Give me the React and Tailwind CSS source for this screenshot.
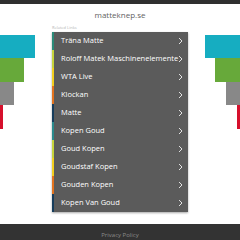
const links = [
  { label: "Träna Matte", stripe: "border-[#2b8a78]" },
  { label: "Roloff Matek Maschinenelemente", stripe: "border-[#c6d43c]" },
  { label: "WTA Live", stripe: "border-[#f2cf1f]" },
  { label: "Klockan", stripe: "border-[#e2731f]" },
  { label: "Matte", stripe: "border-[#173d5c]" },
  { label: "Kopen Goud", stripe: "border-[#2b8a8c]" },
  { label: "Goud Kopen", stripe: "border-[#c6d43c]" },
  { label: "Goudstaf Kopen", stripe: "border-[#f2cf1f]" },
  { label: "Gouden Kopen", stripe: "border-[#e2731f]" },
  { label: "Kopen Van Goud", stripe: "border-[#173d5c]" },
];

function Chevron() {
  return (
    <svg width="5" height="8" viewBox="0 0 5 8" className="shrink-0">
      <polyline
        points="1,1 4,4 1,7"
        fill="none"
        stroke="#f2f2f2"
        strokeWidth="0.9"
      />
    </svg>
  );
}

export default function App() {
  return (
    <div
      className="flex h-[240px] w-[240px] flex-col overflow-hidden bg-white"
      style={{ fontFamily: '"Open Sans", "Noto Sans", sans-serif' }}
    >
      <div className="h-[4px] shrink-0 bg-[#2f2f2f]" />
      <div className="flex h-[20px] shrink-0 items-center justify-center pt-[2px] text-[8px] text-[#626262]">
        matteknep.se
      </div>

      <div className="flex shrink-0">
        <div className="flex w-[52px] flex-col items-start pt-[11px]">
          <div className="h-[23px] w-[35px] bg-[#16adc1]" />
          <div className="h-[24px] w-[24px] bg-[#67a93a]" />
          <div className="h-[23px] w-[14px] bg-[#888888]" />
          <div className="h-[24px] w-[3px] bg-[#d6102c]" />
        </div>

        <div className="w-[136px]">
          <div className="h-[8px] text-[4px] leading-[8px] text-[#b5b5b5]">
            Related Links
          </div>
          <div className="bg-[#5b5b5b] shadow-[0_1px_2px_rgba(0,0,0,0.35)]">
            {links.map((link) => (
              <div
                key={link.label}
                className={`flex h-[18px] items-center border-l-2 pl-[7px] pr-[5px] ${link.stripe}`}
              >
                <span className="flex-1 whitespace-nowrap text-[7.5px] font-medium text-white">
                  {link.label}
                </span>
                <Chevron />
              </div>
            ))}
          </div>
        </div>

        <div className="flex w-[52px] flex-col items-end pt-[11px]">
          <div className="h-[23px] w-[35px] bg-[#16adc1]" />
          <div className="h-[24px] w-[25px] bg-[#67a93a]" />
          <div className="h-[23px] w-[14px] bg-[#888888]" />
          <div className="h-[24px] w-[3px] bg-[#d6102c]" />
        </div>
      </div>

      <div className="mt-[12px] flex flex-1 justify-center bg-[#333333] pt-[8px]">
        <span className="text-[6px] leading-[7px] text-[#8a8a8a]">
          Privacy Policy
        </span>
      </div>
    </div>
  );
}
